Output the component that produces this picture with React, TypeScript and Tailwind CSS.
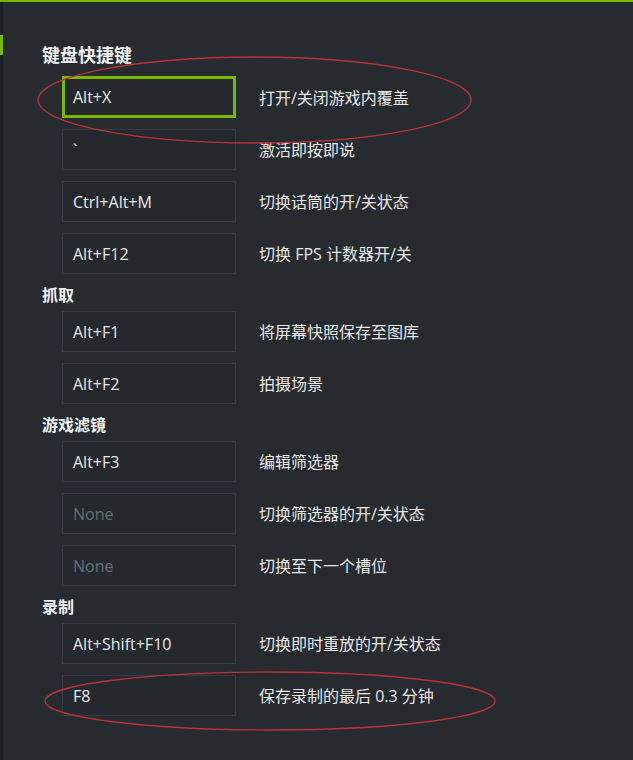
import React from "react";

type Row = { key: string; desc: React.ReactNode; none?: boolean; active?: boolean };
type Section = { title: string; rows: Row[]; first?: boolean };

const sections: Section[] = [
  {
    title: "键盘快捷键",
    first: true,
    rows: [
      { key: "Alt+X", desc: "打开/关闭游戏内覆盖", active: true },
      { key: "`", desc: "激活即按即说" },
      { key: "Ctrl+Alt+M", desc: "切换话筒的开/关状态" },
      { key: "Alt+F12", desc: "切换 FPS 计数器开/关" },
    ],
  },
  {
    title: "抓取",
    rows: [
      { key: "Alt+F1", desc: "将屏幕快照保存至图库" },
      { key: "Alt+F2", desc: "拍摄场景" },
    ],
  },
  {
    title: "游戏滤镜",
    rows: [
      { key: "Alt+F3", desc: "编辑筛选器" },
      { key: "None", desc: "切换筛选器的开/关状态", none: true },
      { key: "None", desc: "切换至下一个槽位", none: true },
    ],
  },
  {
    title: "录制",
    rows: [
      { key: "Alt+Shift+F10", desc: "切换即时重放的开/关状态" },
      { key: "F8", desc: "保存录制的最后 0.3 分钟" },
    ],
  },
];

function KeyRow({ row }: { row: Row }) {
  return (
    <div className="flex items-center h-[41px]">
      <div
        className={
          row.active
            ? "w-[174px] h-[42px] -mt-[1px] border-[3px] border-[#76b900] bg-[#25292e] flex items-center pl-[8px]"
            : "w-[174px] h-[41px] border border-[#363b42] bg-[#25292e] flex items-center pl-[10px]"
        }
      >
        <span
          className={
            row.none
              ? "text-[16px] text-[#696e75]"
              : "text-[16px] text-[#e8e8e8]"
          }
        >
          {row.key}
        </span>
      </div>
      <div className="ml-[23px] text-[16px] text-[#e8e8e8] whitespace-nowrap">{row.desc}</div>
    </div>
  );
}

export default function App() {
  return (
    <div className="relative w-[633px] h-[760px] overflow-hidden bg-[#272b30] [font-family:'Open_Sans','Noto_Sans_CJK_SC',sans-serif]">
      <div className="h-[2px] bg-[#76b900]" />
      <div className="flex h-[758px]">
        <div className="w-[3px] bg-[#1d2024] flex flex-col">
          <div className="h-[33px]" />
          <div className="h-[20px] bg-[#76b900]" />
        </div>
        <div className="flex-1 pl-[39px] pt-[42px]">
          {sections.map((s, i) => (
            <div key={i}>
              <div
                className={
                  s.first
                    ? "h-[22px] leading-[22px] text-[18px] font-bold text-[#f2f2f2] mb-[11px]"
                    : "h-[22px] leading-[22px] text-[16px] font-bold text-[#f2f2f2] mt-[10px] mb-[5px]"
                }
              >
                {s.title}
              </div>
              <div className="flex flex-col gap-[11px] pl-[20px]">
                {s.rows.map((r, j) => (
                  <KeyRow key={j} row={r} />
                ))}
              </div>
            </div>
          ))}
        </div>
      </div>
      <svg
        className="absolute inset-0 pointer-events-none"
        width="633"
        height="760"
        viewBox="0 0 633 760"
      >
        <ellipse cx="254.5" cy="100" rx="216.5" ry="43" fill="none" stroke="#b8323a" strokeWidth="1.3" />
        <ellipse cx="270" cy="701" rx="225" ry="29" fill="none" stroke="#b8323a" strokeWidth="1.3" />
      </svg>
    </div>
  );
}
